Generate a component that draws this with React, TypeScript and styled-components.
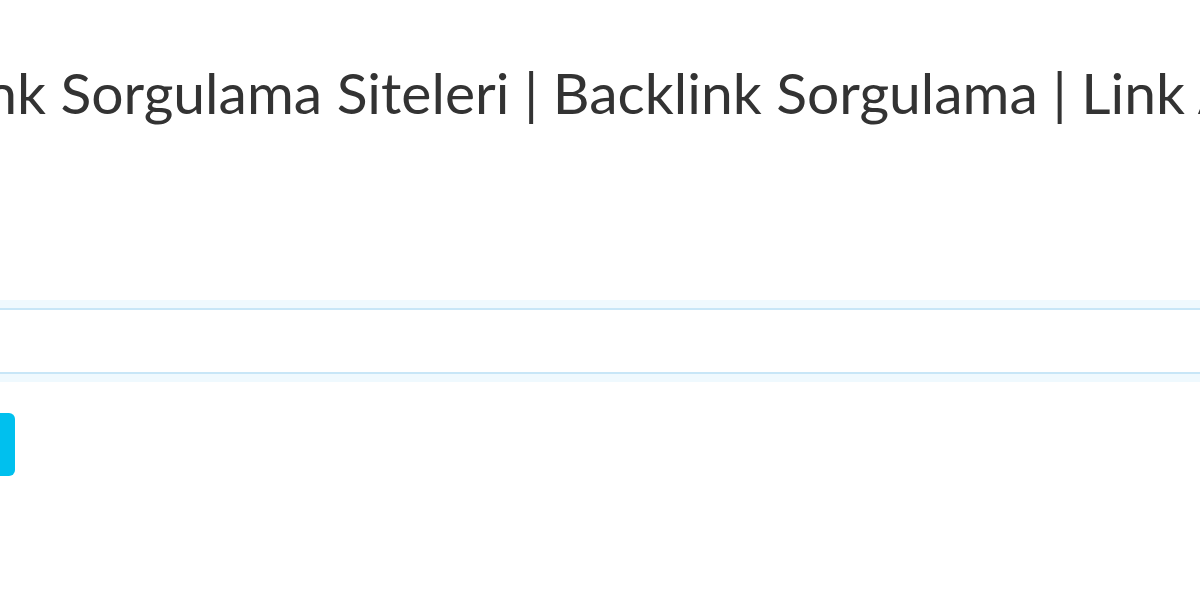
import React from 'react';
import styled, { createGlobalStyle } from 'styled-components';

const GlobalStyle = createGlobalStyle`
  html, body {
    margin: 0;
    padding: 0;
    background: #fff;
  }
  body {
    font-family: Lato, "Open Sans", Arial, sans-serif;
    color: #333;
  }
`;

const Page = styled.div`
  width: 100%;
  height: 600px;
  overflow: hidden;
  display: flex;
  justify-content: center;
`;

const Container = styled.div`
  flex-shrink: 0;
  width: 1410px;
  display: flex;
  flex-direction: column;
  padding-top: 52px;
`;

const Title = styled.h1`
  margin: 0;
  display: flex;
  justify-content: center;
  font-family: Lato, "Open Sans", sans-serif;
  font-weight: 400;
  font-size: 57px;
  line-height: 80px;
  color: #333;
  white-space: nowrap;
`;

const Form = styled.form`
  display: flex;
  flex-direction: column;
  align-items: flex-start;
  margin-top: 176px;
`;

const Input = styled.input`
  box-sizing: border-box;
  width: 100%;
  height: 66px;
  border: 2px solid #c8e6f7;
  background: #fff;
  box-shadow: 0 0 0 8px #eff9fe;
  outline: none;
  padding: 0 20px;
  font-size: 20px;
  font-family: inherit;
`;

const Button = styled.button`
  margin-top: 39px;
  width: 120px;
  height: 63px;
  border: none;
  border-radius: 6px;
  background: #00c0ee;
  color: #fff;
  font-size: 20px;
  font-family: inherit;
  cursor: pointer;
`;

export default function App() {
  return (
    <>
      <GlobalStyle />
      <Page>
        <Container>
          <Title>
            <span>Backlink Sorgulama Siteleri | Backlink Sorgulama | Link Analizi</span>
          </Title>
          <Form onSubmit={(e) => e.preventDefault()}>
            <Input type="text" name="url" aria-label="Site adresi" />
            <Button type="submit">Sorgula</Button>
          </Form>
        </Container>
      </Page>
    </>
  );
}
